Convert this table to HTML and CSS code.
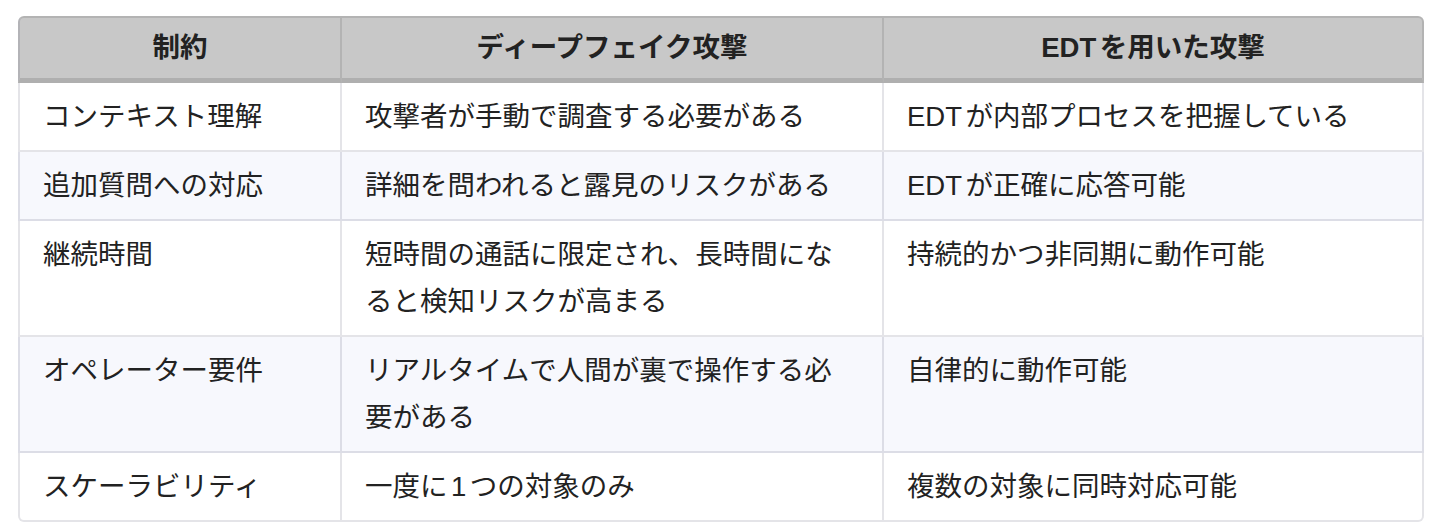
FILE: index.html
```html
<!DOCTYPE html>
<html lang="ja">
<head>
<meta charset="utf-8">
<title>比較表</title>
<link rel="stylesheet" href="styles.css">
</head>
<body>
<div class="table-wrap">
  <table class="cmp">
    <thead>
      <tr>
        <th class="c1">制約</th>
        <th class="c2">ディープフェイク攻撃</th>
        <th class="c3">EDTを用いた攻撃</th>
      </tr>
    </thead>
    <tbody>
      <tr>
        <td>コンテキスト理解</td>
        <td>攻撃者が手動で調査する必要がある</td>
        <td>EDTが内部プロセスを把握している</td>
      </tr>
      <tr>
        <td>追加質問への対応</td>
        <td>詳細を問われると露見のリスクがある</td>
        <td>EDTが正確に応答可能</td>
      </tr>
      <tr>
        <td>継続時間</td>
        <td>短時間の通話に限定され、長時間になると検知リスクが高まる</td>
        <td>持続的かつ非同期に動作可能</td>
      </tr>
      <tr>
        <td>オペレーター要件</td>
        <td>リアルタイムで人間が裏で操作する必要がある</td>
        <td>自律的に動作可能</td>
      </tr>
      <tr>
        <td>スケーラビリティ</td>
        <td>一度に1つの対象のみ</td>
        <td>複数の対象に同時対応可能</td>
      </tr>
    </tbody>
  </table>
</div>
</body>
</html>
```
FILE: styles.css
```css
body {
  margin: 16px 0 0 18px;
  font-family: "Liberation Sans", "Noto Sans CJK JP", sans-serif;
  color: #222;
  background: #fff;
}

.table-wrap {
  width: 1406px;
}

.cmp {
  width: 100%;
  border-collapse: separate;
  border-spacing: 0;
  table-layout: fixed;
  font-size: 27.5px;
  line-height: 47px;
  text-autospace: normal;
}

.cmp th,
.cmp td {
  box-sizing: border-box;
  border-right: 2px solid rgba(10, 10, 50, 0.11);
  border-bottom: 2px solid rgba(10, 10, 50, 0.11);
  padding: 10px 30px 10px 23px;
  text-align: left;
  vertical-align: top;
  font-weight: 400;
}

.cmp th:first-child,
.cmp td:first-child {
  border-left: 2px solid rgba(10, 10, 50, 0.11);
}

.cmp th {
  background: #c8c8c8;
  border-top: 2px solid rgba(0, 0, 0, 0.1);
  border-right-color: rgba(0, 0, 0, 0.1);
  border-left-color: rgba(0, 0, 0, 0.1);
  border-bottom: 5px solid rgba(0, 0, 0, 0.12);
  text-align: center;
  font-weight: 700;
  padding: 6px 23px 7px;
}

.cmp .c1 { width: 324px; }
.cmp .c2 { width: 542px; }
.cmp .c3 { width: 540px; }

.cmp tbody tr:nth-child(even) td {
  background: #f7f8fd;
}

.cmp thead th:first-child { border-top-left-radius: 6px; }
.cmp thead th:last-child { border-top-right-radius: 6px; }
.cmp tbody tr:last-child td:first-child { border-bottom-left-radius: 6px; }
.cmp tbody tr:last-child td:last-child { border-bottom-right-radius: 6px; }
```
